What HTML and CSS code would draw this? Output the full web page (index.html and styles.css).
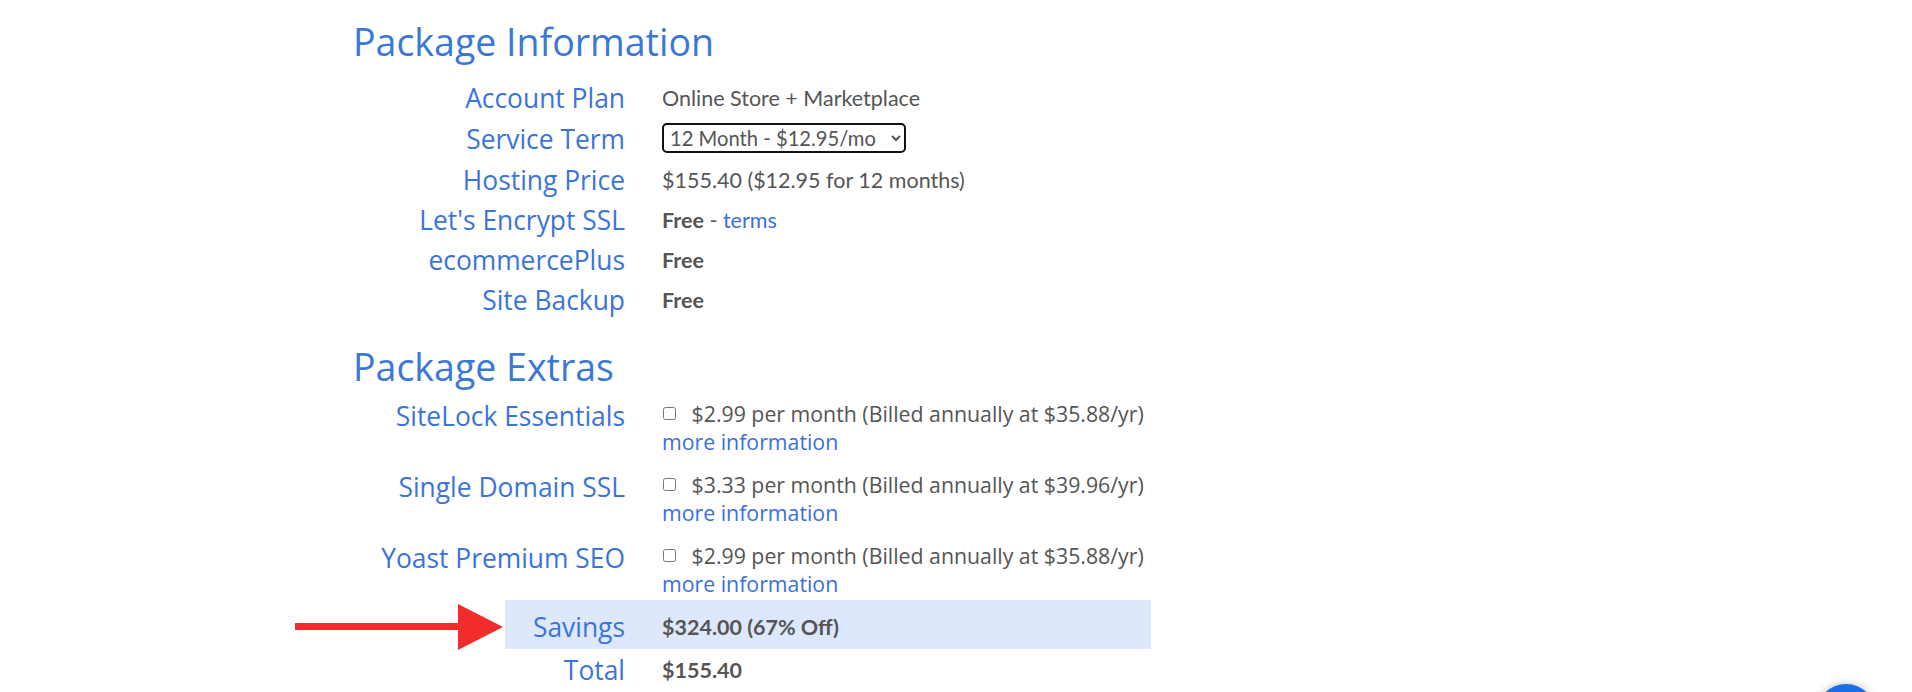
FILE: index.html
```html
<!DOCTYPE html>
<html>
  <head>
    <meta charset="UTF-8" />
    <meta name="viewport" content="width=device-width, initial-scale=1.0" />
    <title>Package Information</title>
    <link rel="stylesheet" href="styles.css">
  </head>
  <body>
    <main class="checkout">
      <h2 class="section-title">Package Information</h2>
      <div class="info-rows">
        <div class="row">
          <div class="label">Account Plan</div>
          <div class="value">Online Store + Marketplace</div>
        </div>
        <div class="row term-row">
          <div class="label">Service Term</div>
          <div class="value">
            <select class="term-select">
              <option>12 Month - $12.95/mo</option>
              <option>36 Month - $9.95/mo</option>
            </select>
          </div>
        </div>
        <div class="row">
          <div class="label">Hosting Price</div>
          <div class="value">$155.40 ($12.95 for 12 months)</div>
        </div>
        <div class="row">
          <div class="label">Let's Encrypt SSL</div>
          <div class="value"><b>Free</b> - <a href="#">terms</a></div>
        </div>
        <div class="row">
          <div class="label">ecommercePlus</div>
          <div class="value"><b>Free</b></div>
        </div>
        <div class="row">
          <div class="label">Site Backup</div>
          <div class="value"><b>Free</b></div>
        </div>
      </div>

      <h2 class="section-title extras-title">Package Extras</h2>
      <div class="extras">
        <div class="row extra">
          <div class="label">SiteLock Essentials</div>
          <div class="extra-value">
            <label><input type="checkbox" /> $2.99 per month (Billed annually at $35.88/yr)</label>
            <a href="#">more information</a>
          </div>
        </div>
        <div class="row extra">
          <div class="label">Single Domain SSL</div>
          <div class="extra-value">
            <label><input type="checkbox" /> $3.33 per month (Billed annually at $39.96/yr)</label>
            <a href="#">more information</a>
          </div>
        </div>
        <div class="row extra">
          <div class="label">Yoast Premium SEO</div>
          <div class="extra-value">
            <label><input type="checkbox" /> $2.99 per month (Billed annually at $35.88/yr)</label>
            <a href="#">more information</a>
          </div>
        </div>
      </div>

      <div class="row savings">
        <!-- red pointer on the savings line -->
        <svg class="pointer" width="208" height="46" viewBox="0 0 208 46">
          <rect x="0" y="19" width="166" height="7" fill="#f22c2c" />
          <polygon points="163,0 208,23 163,46" fill="#f22c2c" />
        </svg>
        <div class="label">Savings</div>
        <div class="value"><b>$324.00 (67% Off)</b></div>
      </div>
      <div class="row total">
        <div class="label">Total</div>
        <div class="value"><b>$155.40</b></div>
      </div>
    </main>

    <button class="chat-button" aria-label="Chat"></button>
  </body>
</html>
```

FILE: styles.css
```css
body {
  margin: 0;
  background-color: #fff;
  font-family: "Open Sans", sans-serif;
  overflow: hidden;
}
a {
  color: #3b6fd9;
  text-decoration: none;
}
.checkout {
  padding-left: 353px;
}
.section-title {
  margin: 16px 0 0;
  font-size: 37.5px;
  font-weight: 400;
  line-height: 52px;
  color: #3a78d8;
}
.extras-title {
  margin-top: 21px;
}
.info-rows {
  margin-top: 10px;
}
.row {
  display: flex;
  column-gap: 37px;
  position: relative;
}
.label {
  width: 272px;
  flex-shrink: 0;
  text-align: right;
  font-size: 26.4px;
  line-height: 40px;
  color: #3b74d9;
}
.value {
  font-family: "Lato", sans-serif;
  font-size: 21.5px;
  line-height: 40px;
  color: #555;
}
.value b {
  font-weight: 700;
}
.term-row .label {
  line-height: 42px;
}
.term-select {
  margin-top: 4px;
  width: 244px;
  height: 30px;
  padding: 0 2px;
  border: 2px solid #111;
  border-radius: 5px;
  background-color: #fff;
  font-family: "Lato", sans-serif;
  font-size: 20.2px;
  color: #555;
}

.extras {
  margin-top: 7px;
  display: flex;
  flex-direction: column;
  row-gap: 15px;
}
.extra .label {
  line-height: 32px;
}
.extra-value {
  display: flex;
  flex-direction: column;
  font-size: 21.3px;
  line-height: 28px;
  color: #555;
}
.extra-value input {
  margin: 0 10px 0 1px;
  width: 13px;
  height: 13px;
  vertical-align: 2px;
}

.savings {
  margin: 2px 0 0 152px;
  width: 646px;
  padding: 7px 0 2px;
  background-color: #dde8fc;
  column-gap: 37px;
}
.savings .label {
  width: 120px;
}
.total {
  margin-top: 1px;
}
.pointer {
  position: absolute;
  right: calc(100% + 2px);
  top: 4px;
}
.chat-button {
  position: fixed;
  right: 36px;
  bottom: -52px;
  width: 60px;
  height: 60px;
  border: none;
  border-radius: 50%;
  background-color: #1b6fe6;
  box-shadow: 0 0 8px rgba(0, 0, 0, 0.25);
}
```
